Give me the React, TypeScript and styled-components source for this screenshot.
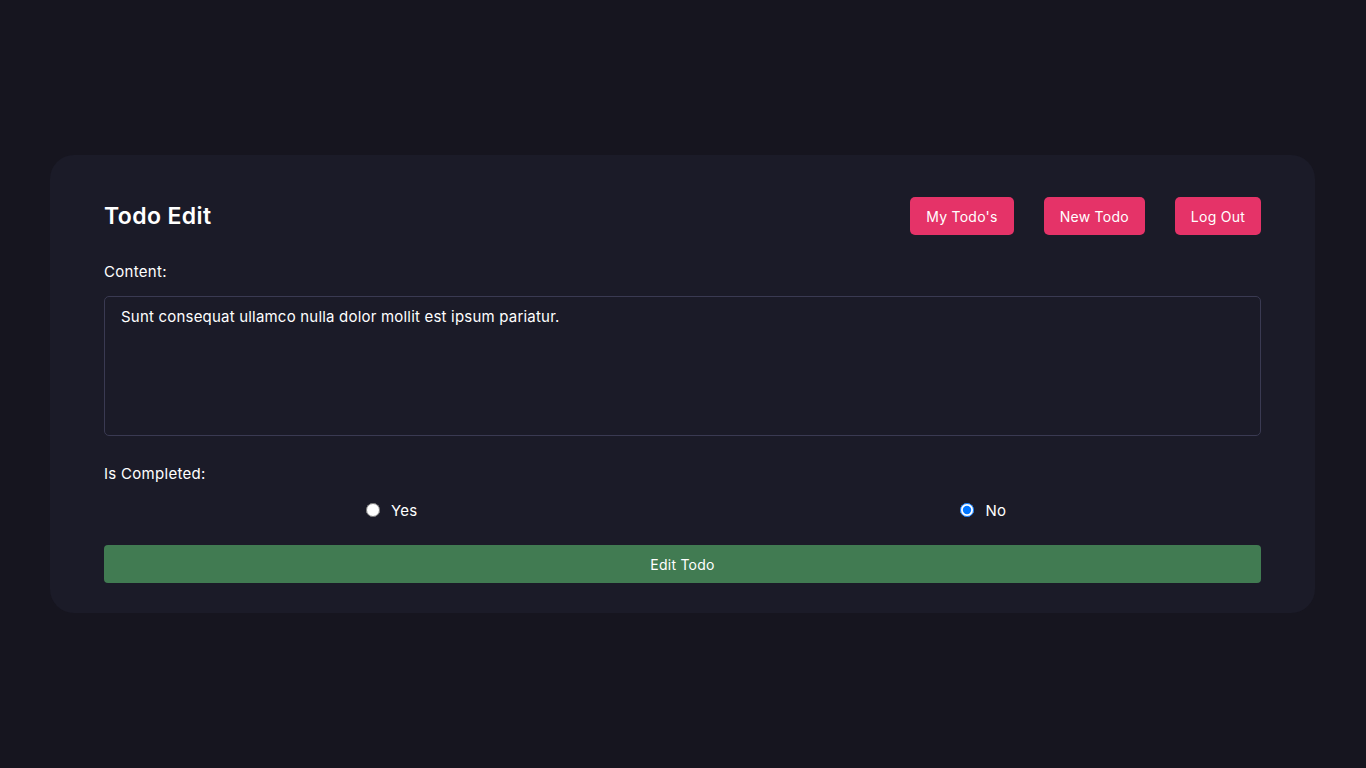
import React, { useState } from "react";
import styled, { createGlobalStyle } from "styled-components";

const Global = createGlobalStyle`
  html, body { margin: 0; padding: 0; background: #16151f; }
  body { font-family: Inter, "Open Sans", sans-serif; color: #ffffff; }
  * { box-sizing: border-box; }
`;

const Page = styled.div`
  min-height: 768px;
  display: flex;
  align-items: center;
  justify-content: center;
  padding: 0 51px 0 50px;
`;

const Card = styled.div`
  width: 100%;
  background: #1b1b28;
  border-radius: 24px;
  padding: 42px 54px 30px;
  display: flex;
  flex-direction: column;
`;

const Header = styled.div`
  display: flex;
  align-items: center;
  justify-content: space-between;
  height: 38px;
`;

const Title = styled.h1`
  margin: 0;
  font-size: 23px;
  font-weight: 600;
  letter-spacing: 0.4px;
`;

const Nav = styled.div`
  display: flex;
  gap: 30px;
`;

const NavButton = styled.button`
  height: 38px;
  padding: 0 16px;
  border: none;
  border-radius: 5px;
  background: #e53368;
  color: #ffffff;
  font-family: inherit;
  font-size: 14px;
  letter-spacing: 0.25px;
  cursor: pointer;
`;

const Label = styled.label<{ $top: number }>`
  display: block;
  font-size: 15px;
  letter-spacing: 0.3px;
  margin-top: ${(p) => p.$top}px;
  line-height: 20px;
`;

const TextArea = styled.textarea`
  display: block;
  width: 100%;
  height: 140px;
  margin-top: 14px;
  padding: 10px 16px;
  background: #1b1b28;
  border: 1px solid #3a3a52;
  border-radius: 5px;
  color: #ffffff;
  font-family: inherit;
  font-size: 15px;
  letter-spacing: 0.2px;
  line-height: 20px;
  resize: none;
  outline: none;
`;

const RadioRow = styled.div`
  display: flex;
  margin-top: 16px;
  height: 20px;
`;

const RadioOption = styled.label<{ $padLeft: number }>`
  flex: 1;
  display: flex;
  align-items: center;
  justify-content: center;
  gap: 11px;
  padding-left: ${(p) => p.$padLeft}px;
  font-size: 15px;
  letter-spacing: 0.2px;
`;

const Radio = styled.input`
  width: 14px;
  height: 14px;
  margin: 0;
`;

const SubmitButton = styled.button`
  margin-top: 25px;
  height: 38px;
  width: 100%;
  border: none;
  border-radius: 4px;
  background: #417b52;
  color: #ffffff;
  font-family: inherit;
  font-size: 14px;
  letter-spacing: 0.25px;
  cursor: pointer;
`;

export default function App() {
  const [done, setDone] = useState(false);
  return (
    <>
      <Global />
      <Page>
        <Card>
          <Header>
            <Title>Todo Edit</Title>
            <Nav>
              <NavButton>My Todo's</NavButton>
              <NavButton>New Todo</NavButton>
              <NavButton>Log Out</NavButton>
            </Nav>
          </Header>
          <Label $top={27}>Content:</Label>
          <TextArea defaultValue="Sunt consequat ullamco nulla dolor mollit est ipsum pariatur." />
          <Label $top={28}>Is Completed:</Label>
          <RadioRow>
            <RadioOption $padLeft={10}>
              <Radio type="radio" name="done" checked={done} onChange={() => setDone(true)} />
              Yes
            </RadioOption>
            <RadioOption $padLeft={36}>
              <Radio type="radio" name="done" checked={!done} onChange={() => setDone(false)} />
              No
            </RadioOption>
          </RadioRow>
          <SubmitButton>Edit Todo</SubmitButton>
        </Card>
      </Page>
    </>
  );
}
